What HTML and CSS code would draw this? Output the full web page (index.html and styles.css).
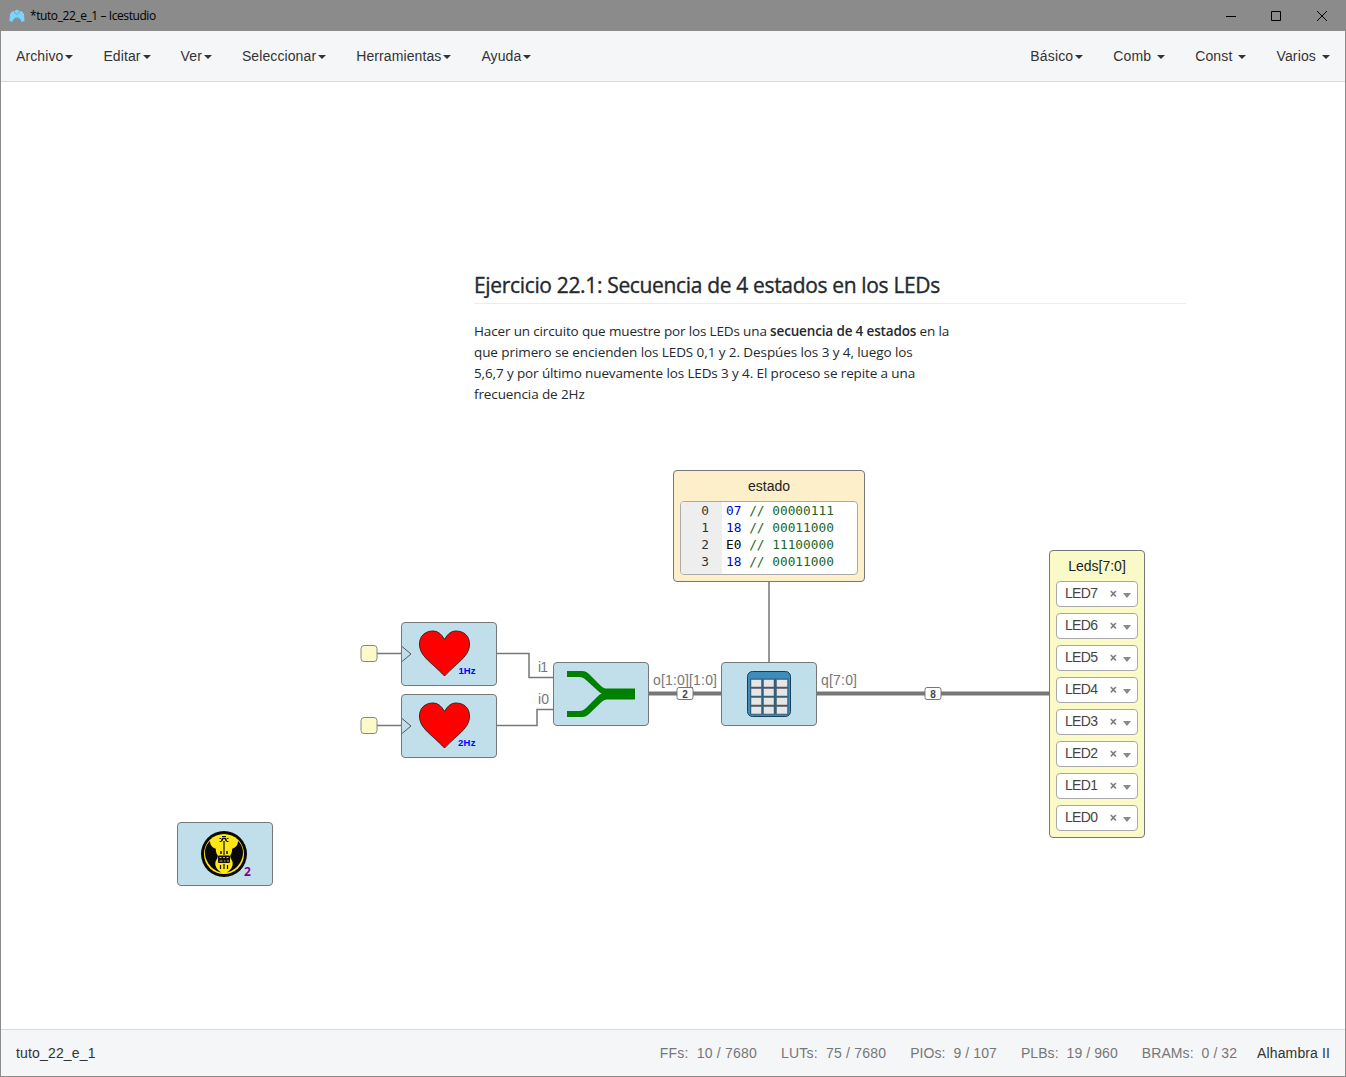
FILE: index.html
```html
<!DOCTYPE html>
<html lang="es">
<head>
<meta charset="utf-8">
<title>*tuto_22_e_1 – Icestudio</title>
<link rel="stylesheet" href="styles.css">
</head>
<body>
<div class="window">
  <header class="titlebar">
    <svg class="app-icon" width="16" height="14" viewBox="0 0 16 14"><path d="M1 5 3 2.500 5.500 2 8 .5l2.500 1.500 2.500.5L15 5l.5 7-3 1-2-3L8 9 5.500 10l-2 3L.5 12z" fill="#7fd3fa"/><path d="M5.500 2.500l1 2 1.500 1 1.500-1 1-2M3.500 12.500L5.500 9.500 8 8.500l2.500 1 2 3" fill="none" stroke="#35728f" stroke-width=".7" stroke-dasharray="1.200 1"/></svg>
    <span class="app-title">*tuto_22_e_1 – Icestudio</span>
    <svg class="win-controls" width="104" height="12" viewBox="0 0 104 12" fill="none" stroke="#000"><path d="M0 6.500h10M45.500 1.500h9v9h-9zM91 1l10 10M101 1L91 11"/></svg>
  </header>
  <nav class="menubar">
    <ul class="menu menu-left">
      <li>Archivo<i class="caret"></i></li><li>Editar<i class="caret"></i></li><li>Ver<i class="caret"></i></li><li>Seleccionar<i class="caret"></i></li><li>Herramientas<i class="caret"></i></li><li>Ayuda<i class="caret"></i></li>
    </ul>
    <ul class="menu menu-right">
      <li>Básico<i class="caret"></i></li><li>Comb <i class="caret"></i></li><li>Const <i class="caret"></i></li><li>Varios <i class="caret"></i></li>
    </ul>
  </nav>
  <main class="canvas">
    <article class="note">
      <h2><span class="h-text">Ejercicio 22.1: Secuencia de 4 estados en los LEDs</span></h2>
      <p><span class="l1">Hacer un circuito que muestre por los LEDs una <b>secuencia de 4 estados</b> en la</span><br><span class="l2">que primero se encienden los LEDS 0,1 y 2. Despúes los 3 y 4, luego los</span><br><span class="l3">5,6,7 y por último nuevamente los LEDs 3 y 4. El proceso se repite a una</span><br><span class="l4">frecuencia de 2Hz</span></p>
    </article>
    <svg class="wires" width="1344" height="947" viewBox="1 82 1344 947">
      <g fill="none" stroke="#777" stroke-width="1.500">
        <path d="M377 653.500h25M377 725.500h25M496 653.500h33v24h25M496 725.500h41v-16h17M769 581v82"/>
        <path d="M648 693.500h74M816 693.500h234" stroke-width="4"/>
      </g>
      <g class="port-labels">
        <text x="538" y="672" textLength="10">i1</text>
        <text x="538" y="704" textLength="11">i0</text>
        <text x="653" y="685" textLength="64">o[1:0][1:0]</text>
        <text x="821" y="685" textLength="36">q[7:0]</text>
      </g>
      <g fill="#fff" stroke="#777"><rect x="677" y="687.500" width="16" height="12" rx="2"/><rect x="925" y="687.500" width="16" height="12" rx="2"/></g>
      <g class="bus-size"><text x="685" y="697.500">2</text><text x="933" y="697.500">8</text></g>
      <g fill="#fbfac8" stroke="#888"><rect x="361" y="645.500" width="16" height="16" rx="3"/><rect x="361" y="717.500" width="16" height="16" rx="3"/></g>
    </svg>

    <section class="block heart-1">
      <svg width="94" height="62" viewBox="402 623 94 62"><path d="M402 646.500l9 7.500-9 7.500" fill="none" stroke="#555"/><path id="heart" d="M444.500 639.500C441 633 437 631 433 631C425 631 419.500 636 419.500 644C419.500 656 430 661 444.500 676C459 661 469.500 656 469.500 644C469.500 636 464 631 456 631C452 631 448 633 444.500 639.500Z" fill="red" stroke="#222" stroke-width=".9"/><text class="hz" x="458.500" y="674" textLength="17">1Hz</text></svg>
    </section>
    <section class="block heart-2">
      <svg width="94" height="62" viewBox="402 623 94 62"><path d="M402 646.500l9 7.500-9 7.500" fill="none" stroke="#555"/><use href="#heart"/><text class="hz" x="458" y="674" textLength="17.500">2Hz</text></svg>
    </section>
    <section class="block joiner">
      <svg width="94" height="62" viewBox="554 663 94 62"><path d="M567 671h15c3 0 5 1 7 3l12 12c2 2 4 2.500 6 2.500h28v11h-28c-2 0-4 1-6 3l-12 11.500c-2 2-4 3-7 3h-15v-6h12c3 0 5-1 7-3l11-11c2-2 3-3 5-3.500-2-.5-3-1.500-5-3.500l-11-10c-2-2-4-3-7-3h-12z" fill="green"/></svg>
    </section>
    <section class="block table">
      <svg width="94" height="62" viewBox="722 663 94 62"><rect x="747.500" y="671.500" width="43" height="45" rx="5" fill="#3d8dbc" stroke="#173f5a"/><path d="M750 678.500h38.500v36h-38.500z" fill="#2c6384"/><g fill="#e6e6e6" stroke="#555" stroke-width=".5"><path d="M751 679.500h10.500v7.500h-10.500zM763.500 679.500h10.500v7.500h-10.500zM776.500 679.500h11v7.500h-11zM751 688.500h10.500v7.500h-10.500zM763.500 688.500h10.500v7.500h-10.500zM776.500 688.500h11v7.500h-11zM751 697.500h10.500v7.500h-10.500zM763.500 697.500h10.500v7.500h-10.500zM776.500 697.500h11v7.500h-11zM751 706.500h10.500v7.500h-10.500zM763.500 706.500h10.500v7.500h-10.500zM776.500 706.500h11v7.500h-11z"/></g></svg>
    </section>
    <section class="block logo">
      <svg width="94" height="62" viewBox="178 823 94 62"><circle cx="224" cy="854" r="23" fill="#090909"/><circle cx="224" cy="854" r="20" fill="#ffe617"/><path id="wing" d="M210 841C204.500 846 203.500 854 207 861C210 867 215 871 221 872.500C217 869.500 214.500 866 215.500 862C216 859.500 218.500 858 217.500 855C215 851 216.500 850 215.500 848.500C213 848 210 845.500 210 841Z" fill="#090909"/><use href="#wing" transform="matrix(-1 0 0 1 448 0)"/><g fill="none" stroke="#111"><path d="M224 841v14" stroke-width="1.200"/><path d="M221.500 841.500l1-3h3l1 3" stroke-width="1.500"/><path d="M219.500 838.500h1.500M227 838.500h1.500M219.500 841.500h1.500M227 841.500h1.500M222 836.500h4"/><path d="M221 851v3M227 851v3" stroke-width="1.500"/><path d="M220.500 865v4M224 864v5M227.500 865v4" stroke-width="1.200"/></g><rect x="218" y="855.500" width="12" height="7.500" rx="1" fill="#111"/><path d="M219.500 857.500h2M223 857.500h2M226.500 857.500h2M219.500 861h3M224 861h1.500M227 861h2" stroke="#ffe617" stroke-width=".8"/><text class="version" x="244" y="876">2</text></svg>
    </section>

    <section class="memory">
      <div class="block-name">estado</div>
      <div class="editor">
        <div class="gutter">0<br>1<br>2<br>3</div>
        <div class="code"><b>07</b> <i>// 00000111</i><br><b>18</b> <i>// 00011000</i><br>E0 <i>// 11100000</i><br><b>18</b> <i>// 00011000</i></div>
      </div>
    </section>

    <section class="leds">
      <div class="block-name">Leds[7:0]</div>
      <div class="select">LED7<span>×</span><i></i></div>
      <div class="select">LED6<span>×</span><i></i></div>
      <div class="select">LED5<span>×</span><i></i></div>
      <div class="select">LED4<span>×</span><i></i></div>
      <div class="select">LED3<span>×</span><i></i></div>
      <div class="select">LED2<span>×</span><i></i></div>
      <div class="select">LED1<span>×</span><i></i></div>
      <div class="select">LED0<span>×</span><i></i></div>
    </section>
  </main>
  <footer class="statusbar">
    <span class="project">tuto_22_e_1</span>
    <div class="resources">
      <span class="wide">FFs:&nbsp; 10 / 7680</span><span class="wide">LUTs:&nbsp; 75 / 7680</span><span>PIOs:&nbsp; 9 / 107</span><span>PLBs:&nbsp; 19 / 960</span><span>BRAMs:&nbsp; 0 / 32</span>
    </div>
    <span class="board">Alhambra II</span>
  </footer>
</div>
</body>
</html>
```
FILE: styles.css
```css
* { box-sizing: border-box; }
body { margin: 0; font: 14px/20px "Liberation Sans", Arial, sans-serif; color: #333; }
.window { display: flex; flex-direction: column; width: 1346px; height: 1077px; border: 1px solid #8b8b8b; background: #fff; overflow: hidden; }
.titlebar { display: flex; align-items: center; height: 30px; flex: none; padding: 0 15px 0 8px; background: #8b8b8b; color: #000; }
.app-icon { margin-right: 5px; }
.app-title { font: 12px/30px "Open Sans", sans-serif; letter-spacing: -.42px; }
.win-controls { margin-left: auto; }
.menubar { display: flex; justify-content: space-between; height: 51px; flex: none; background: #f5f6f8; border-bottom: 1px solid #d5dbdb; }
.menu { display: flex; margin: 0; padding: 0; list-style: none; }
.menu li { padding: 15px; white-space: pre; }
.menu-left { letter-spacing: .1px; }
.menu-right { letter-spacing: .14px; }
.caret { display: inline-block; margin-left: 2px; vertical-align: middle; border-top: 4px solid #333; border-left: 4px solid transparent; border-right: 4px solid transparent; }
.canvas { position: relative; flex: 1; min-height: 0; }
.note { position: absolute; left: 473px; top: 188px; width: 712px; color: #24292e; font-family: "Open Sans", "Noto Sans", sans-serif; white-space: nowrap; }
.note h2 { margin: 0 0 17px; height: 34px; border-bottom: 1px solid #eaecef; font-size: 21px; line-height: 31px; font-weight: 500; -webkit-text-stroke: .35px #24292e; }
.h-text { letter-spacing: -.34px; }
.note p { margin: 0; font-size: 13.500px; line-height: 21px; }
.note b { font-weight: 600; }
.l1 { letter-spacing: -.15px; }
.l2 { letter-spacing: -.085px; }
.l3 { letter-spacing: -.12px; }
.l4 { letter-spacing: -.11px; }
.wires { position: absolute; left: 0; top: 0; }
.port-labels { font-size: 14px; fill: #777; }
.bus-size { font-size: 10px; font-weight: bold; fill: #444; text-anchor: middle; }
.block { position: absolute; width: 96px; height: 64px; border: 1px solid #777; border-radius: 4px; background: #c0dfeb; }
.block svg { display: block; }
.heart-1 { left: 400px; top: 540px; }
.heart-2 { left: 400px; top: 612px; }
.joiner { left: 552px; top: 580px; }
.table { left: 720px; top: 580px; }
.logo { left: 176px; top: 740px; }
.hz { font: bold 9.500px "Liberation Sans", sans-serif; fill: #00f; }
.version { font: bold 12px "Open Sans", sans-serif; fill: #800080; }
.memory { position: absolute; left: 672px; top: 388px; width: 192px; height: 112px; padding: 5px 6px 6px; border: 1px solid #777; border-radius: 4px; background: #fcefca; }
.block-name { height: 25px; text-align: center; color: #222; }
.editor { display: flex; height: 74px; border: 1px solid #aaa; border-radius: 4px; overflow: hidden; background: #fff; font: 12.800px/17px "DejaVu Sans Mono", monospace; }
.gutter { width: 41px; padding-right: 13px; background: #eee; text-align: right; color: #333; }
.code { padding-left: 4px; color: #000; white-space: pre; }
.code b { font-weight: normal; color: #00c; }
.code i { font-style: normal; color: #262; }
.leds { position: absolute; left: 1048px; top: 468px; width: 96px; height: 288px; padding: 5px 6px; border: 1px solid #777; border-radius: 4px; background: #fafac8; }
.select { display: flex; align-items: center; width: 82px; height: 26px; margin-bottom: 6px; padding: 0 6px 2px 8px; border: 1px solid #aaa; border-radius: 4px; background: #fff; color: #444; letter-spacing: -.7px; }
.select span { margin: 2px 7px 0 auto; font-size: 12px; font-weight: bold; color: #777; }
.select i { margin-top: 5px; border-top: 5px solid #888; border-left: 4px solid transparent; border-right: 4px solid transparent; }
.statusbar { display: flex; align-items: center; height: 47px; flex: none; padding: 0 15px; border-top: 1px solid #d5dbdb; background: #f5f6f8; }
.project { letter-spacing: .16px; }
.resources { display: flex; gap: 24px; margin-left: auto; color: #777; white-space: nowrap; letter-spacing: .08px; }
.wide { letter-spacing: .2px; }
.board { margin-left: 20px; letter-spacing: .12px; }
```
